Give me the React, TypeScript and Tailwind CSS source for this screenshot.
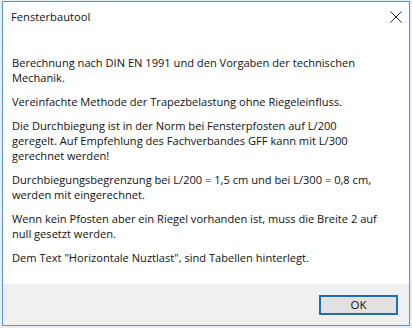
import React from 'react'

const paragraphs = [
  'Berechnung nach DIN EN 1991 und den Vorgaben der technischen Mechanik.',
  'Vereinfachte Methode der Trapezbelastung ohne Riegeleinfluss.',
  'Die Durchbiegung ist in der Norm bei Fensterpfosten auf L/200 geregelt. Auf Empfehlung des Fachverbandes GFF kann mit L/300 gerechnet werden!',
  'Durchbiegungsbegrenzung bei L/200 = 1,5 cm und bei L/300 = 0,8 cm, werden mit eingerechnet.',
  'Wenn kein Pfosten aber ein Riegel vorhanden ist, muss die Breite 2 auf null gesetzt werden.',
  'Dem Text "Horizontale Nuztlast", sind Tabellen hinterlegt.',
]

export default function App() {
  return (
    <div
      className="w-[412px] h-[328px] bg-[#e4eef7] pt-[1px] pl-[2px] pr-[2px] pb-[2px]"
      style={{ fontFamily: '"Open Sans", "Noto Sans", sans-serif' }}
    >
      <div className="flex flex-col h-full border border-[#5f93c2] bg-white">
        {/* Title bar */}
        <div className="flex items-center justify-between h-[30px] pl-[8px] pr-[7px]">
          <span className="text-[11.2px] text-[#111]">Fensterbautool</span>
          <svg width="12" height="12" viewBox="0 0 12 12">
            <path d="M0.5 0.5L11.5 11.5M11.5 0.5L0.5 11.5" stroke="#222" strokeWidth="1" />
          </svg>
        </div>

        {/* Message */}
        <div className="flex-1 pt-[23px] pl-[9px] pr-[12px] text-[11.1px] leading-[15px] text-[#111]">
          {paragraphs.map((p, i) => (
            <p key={i} className="mb-[9px] max-w-[366px]">
              {p}
            </p>
          ))}
        </div>

        {/* Footer */}
        <div className="flex justify-end items-center h-[41px] bg-[#f0f0f0] pr-[11px] pt-[1px]">
          <button className="w-[79px] h-[20px] bg-[#e1e1e1] border-2 border-[#1a6fb8] text-[11.5px] text-[#111] leading-none">
            OK
          </button>
        </div>
      </div>
    </div>
  )
}
